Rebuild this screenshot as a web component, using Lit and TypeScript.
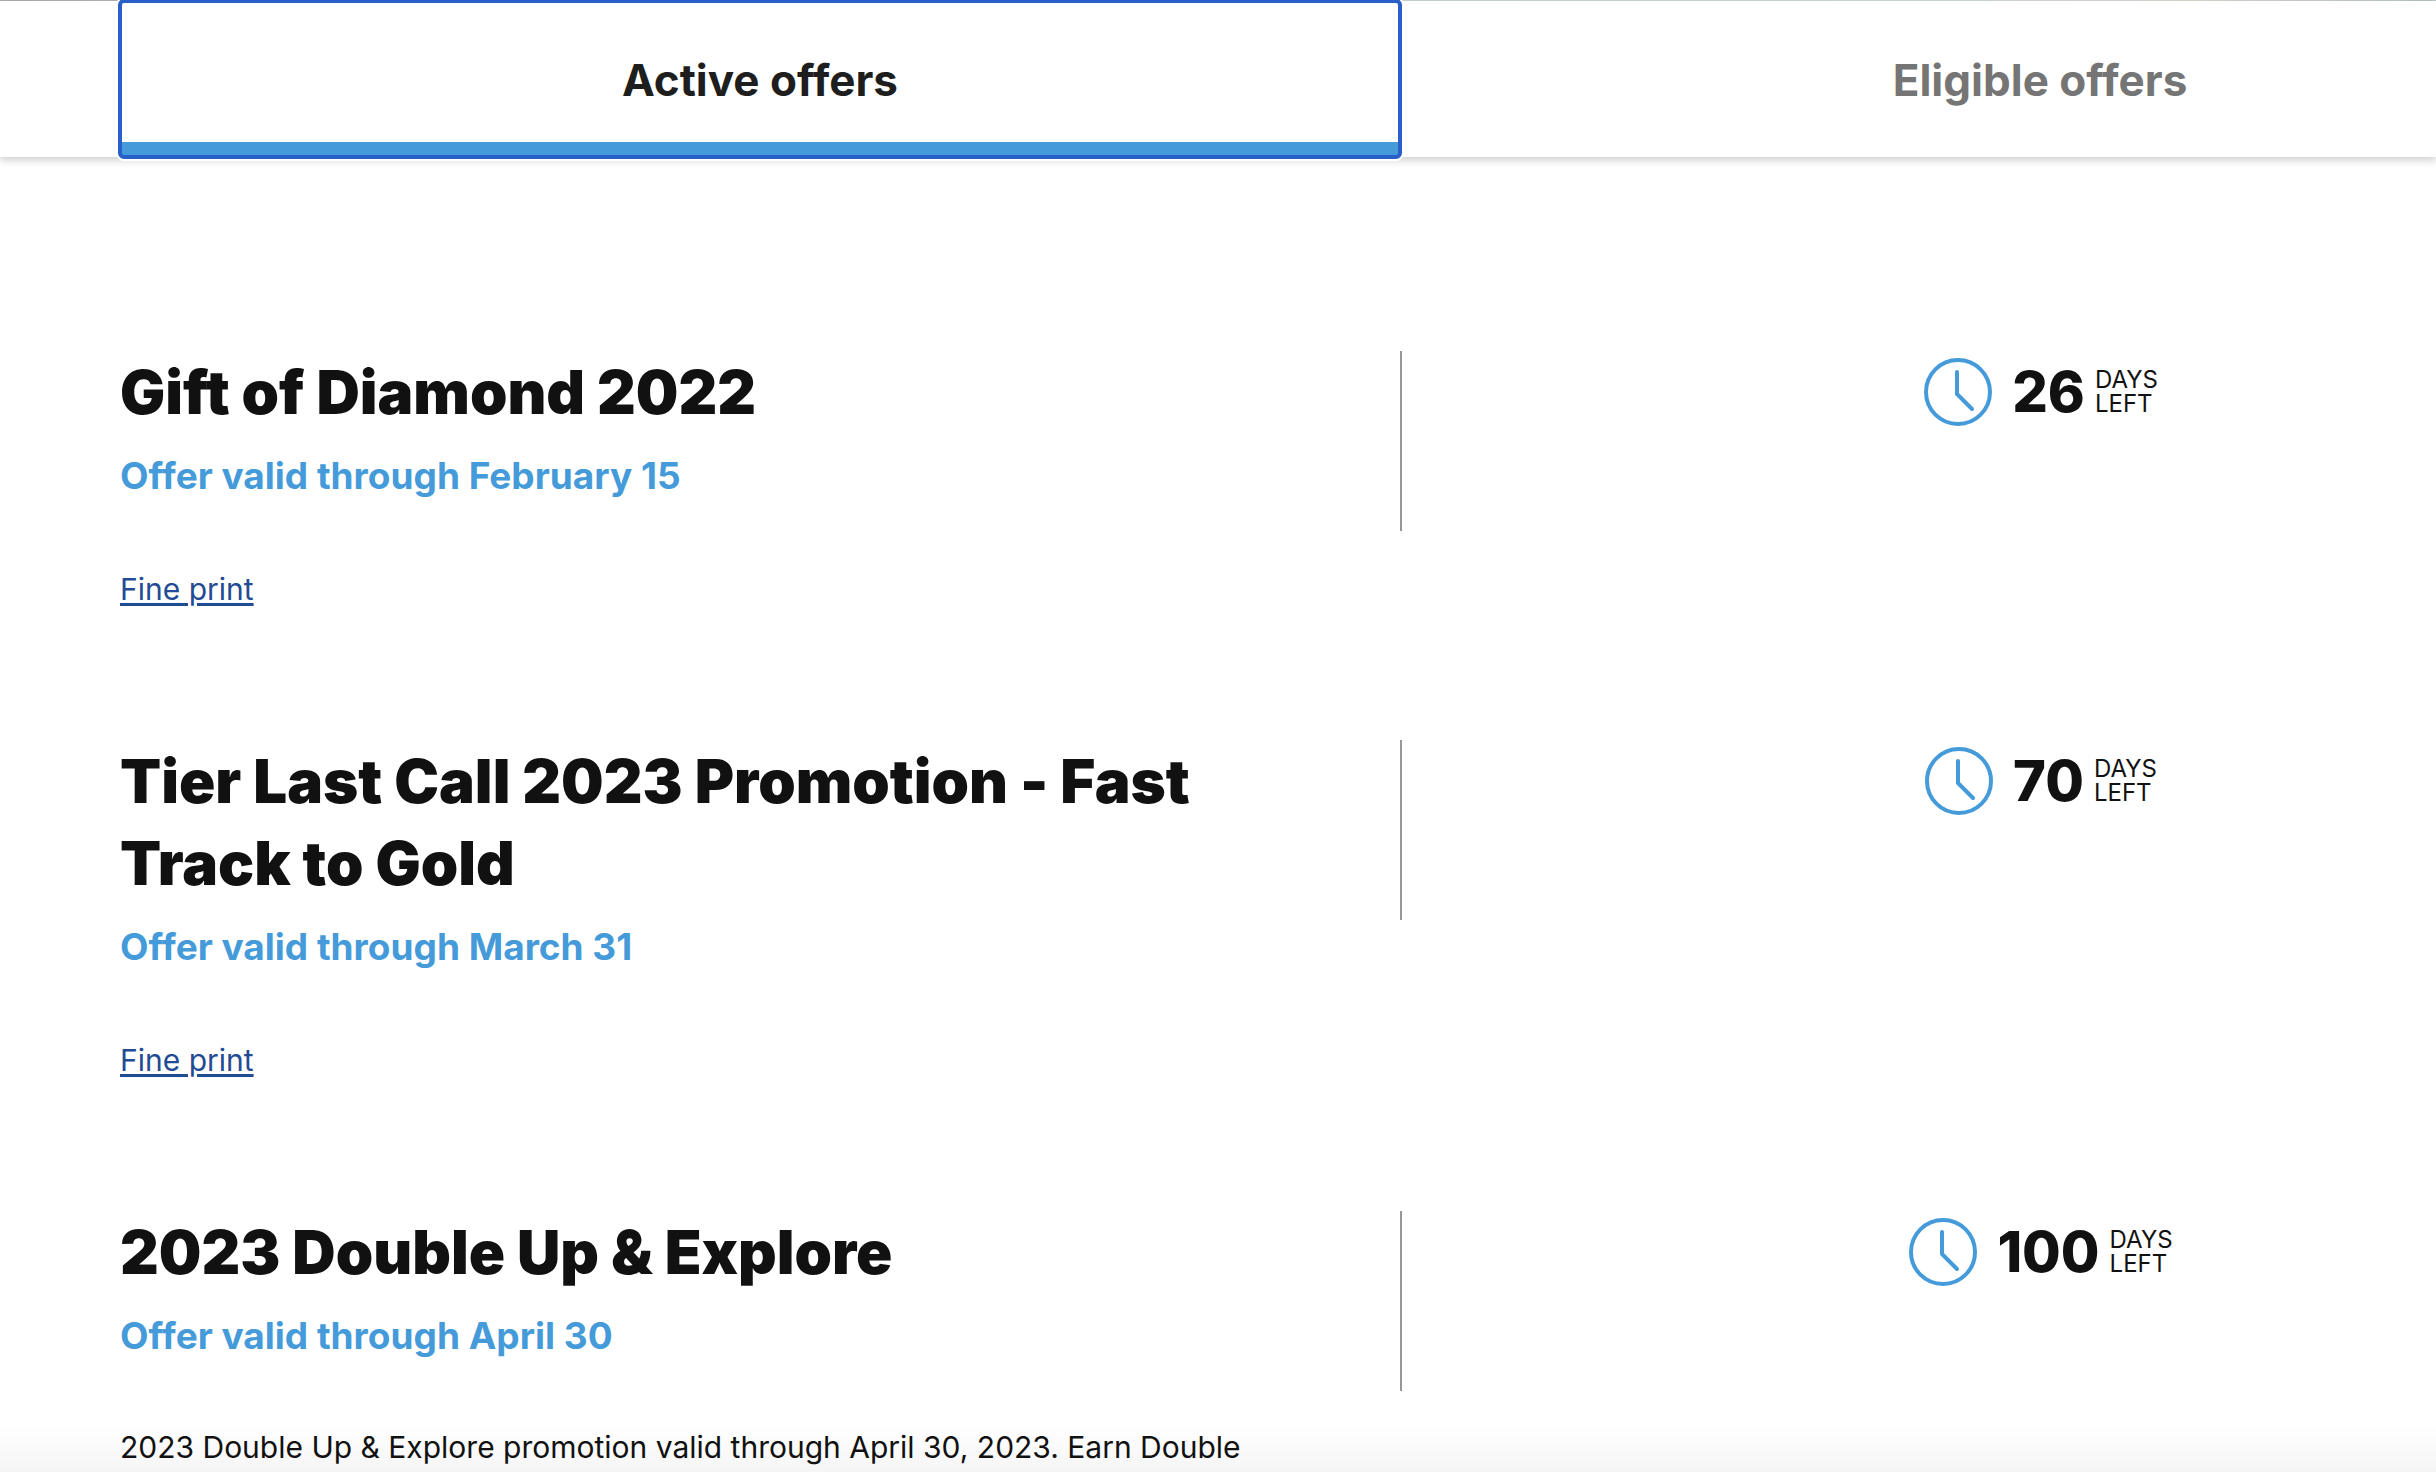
import { LitElement, html, css, nothing } from "lit";
import { customElement, property, state } from "lit/decorators.js";

interface Offer {
  title: string;
  validity: string;
  days: number;
  description?: string;
}

const OFFERS: Offer[] = [
  { title: "Gift of Diamond 2022", validity: "Offer valid through February 15", days: 26 },
  {
    title: "Tier Last Call 2023 Promotion - Fast Track to Gold",
    validity: "Offer valid through March 31",
    days: 70,
  },
  {
    title: "2023 Double Up & Explore",
    validity: "Offer valid through April 30",
    days: 100,
    description: "2023 Double Up & Explore promotion valid through April 30, 2023. Earn Double",
  },
];

@customElement("days-left")
export class DaysLeft extends LitElement {
  @property({ type: Number }) days = 0;

  static styles = css`
    :host {
      display: flex;
      justify-content: center;
      align-items: center;
      height: 82px;
      color: #111;
    }
    .clock {
      width: 68px;
      height: 68px;
      margin-right: 20px;
      fill: none;
      stroke: #459bd9;
      stroke-width: 4;
      stroke-linecap: round;
      stroke-linejoin: round;
    }
    .count {
      font-size: 56px;
      line-height: 82px;
      font-weight: 800;
      margin-right: 10px;
    }
    .unit {
      font-size: 24px;
      line-height: 24px;
    }
  `;

  render() {
    return html`
      <svg class="clock" viewBox="0 0 68 68" aria-hidden="true">
        <circle cx="34" cy="34" r="32"></circle>
        <path d="M33 14V36L48 51"></path>
      </svg>
      <span class="count">${this.days}</span>
      <span class="unit">DAYS<br />LEFT</span>
    `;
  }
}

@customElement("offer-row")
export class OfferRow extends LitElement {
  @property({ attribute: false }) offer!: Offer;

  static styles = css`
    :host {
      display: grid;
      grid-template-columns: 1fr 1fr;
    }
    .details {
      padding-right: 140px;
    }
    .title {
      margin: 0;
      font-size: 60px;
      line-height: 82px;
      font-weight: 900;
      color: #111;
    }
    .validity {
      margin: 16px 0 0;
      font-size: 37px;
      line-height: 54px;
      font-weight: 700;
      color: #459bd9;
    }
    .description,
    .more {
      margin: 60px 0 0;
      font-size: 30px;
      color: #111;
    }
    .description {
      line-height: 48px;
    }
    .more {
      line-height: 52px;
    }
    .link {
      color: #234b93;
      text-decoration-thickness: 3px;
      text-underline-offset: 3px;
    }
    .status {
      align-self: start;
      box-sizing: border-box;
      min-height: 180px;
      border-left: 2px solid #979797;
    }
  `;

  render() {
    const { title, validity, days, description } = this.offer;
    return html`
      <div class="details">
        <h2 class="title">${title}</h2>
        <p class="validity">${validity}</p>
        ${description
          ? html`<p class="description">${description}</p>`
          : html`<p class="more"><a class="link" href="#fine-print">Fine print</a></p>`}
      </div>
      <div class="status"><days-left .days=${days}></days-left></div>
    `;
  }
}

@customElement("app-root")
export class AppRoot extends LitElement {
  @state() private tab = 0;

  static styles = css`
    :host {
      display: block;
      position: relative;
      height: 100vh;
      overflow: hidden;
      background: #fff;
      font-family: Inter, "Liberation Sans", sans-serif;
      font-variant-ligatures: none;
    }
    .banner {
      height: 1px;
      background: linear-gradient(90deg, #b4b4b4, #b9c2c0 8%, #cfdcdc 55%, #d5e0e2 80%, #e2dfd6 90%, #bccbcd);
    }
    .tabbar {
      box-shadow: 0 2px 8px 1px rgba(0, 0, 0, 0.2);
    }
    .tabs {
      display: grid;
      grid-template-columns: 1fr 1fr;
      margin: 0 -244px 0 120px;
    }
    .tab {
      box-sizing: border-box;
      height: 156px;
      padding: 2px 0 0;
      border: 0 solid transparent;
      border-width: 15px 0;
      background: transparent;
      font: inherit;
      font-size: 44px;
      line-height: 54px;
      font-weight: 700;
      color: #757575;
    }
    .tab.active {
      color: #1e1e1e;
      background: #fff;
      border-bottom-color: #459bd9;
      border-radius: 4px;
      outline: 4px solid #285fc9;
      outline-offset: -2px;
      box-shadow: 0 0 0 4px #fff;
    }
    .offers {
      display: grid;
      gap: 125px;
      padding-top: 194px;
      margin: 0 -244px 0 120px;
    }
    .fade {
      position: absolute;
      left: 0;
      right: 0;
      bottom: 0;
      height: 48px;
      pointer-events: none;
      background: linear-gradient(rgba(0, 0, 0, 0), rgba(0, 0, 0, 0.04));
    }
  `;

  render() {
    return html`
      <div class="banner"></div>
      <nav class="tabbar">
        <div class="tabs" role="tablist">
          ${["Active offers", "Eligible offers"].map(
            (label, i) => html`<button
              class="tab ${i === this.tab ? "active" : ""}"
              role="tab"
              aria-selected=${i === this.tab ? "true" : "false"}
              @click=${() => (this.tab = i)}
            >${label}</button>`,
          )}
        </div>
      </nav>
      <main class="offers">
        ${this.tab === 0 ? OFFERS.map((o) => html`<offer-row .offer=${o}></offer-row>`) : nothing}
      </main>
      <div class="fade"></div>
    `;
  }
}
